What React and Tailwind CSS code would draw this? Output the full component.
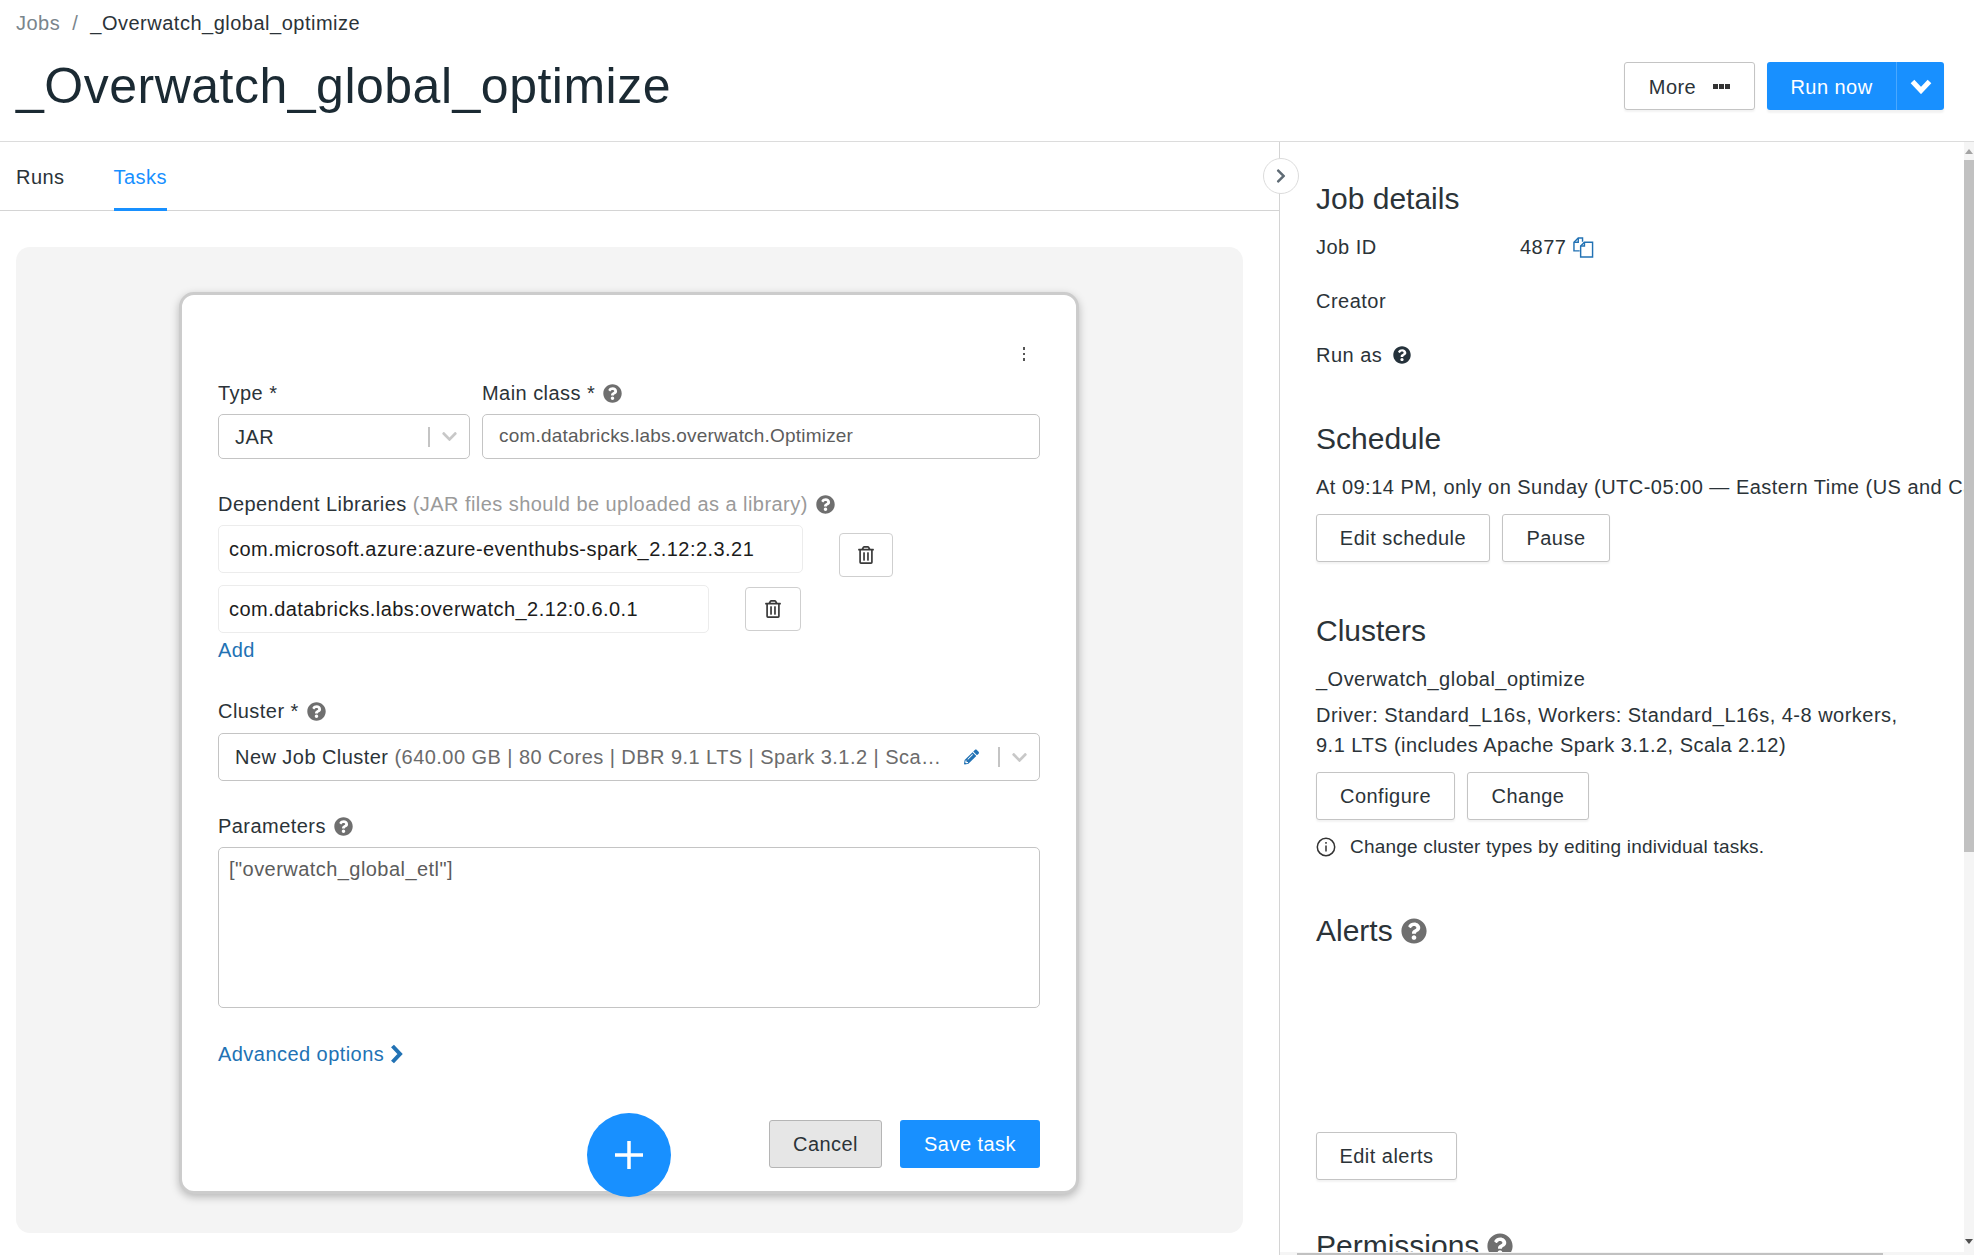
import React from 'react'
import { FaQuestionCircle, FaChevronDown, FaChevronRight, FaRegTrashAlt, FaPencilAlt } from 'react-icons/fa'

function OutlineButton({ children, className = '' }) {
  return (
    <button className={`h-[48px] rounded-[3px] border border-[#c4c4c4] bg-white text-[20px] text-[#2b3338] shadow-[0_2px_2px_rgba(0,0,0,0.05)] ${className}`}>
      {children}
    </button>
  )
}

function Help({ className = '' }) {
  return <FaQuestionCircle className={`inline-block shrink-0 text-[#6f6f6f] ${className}`} />
}

function TrashButton({ className = '' }) {
  return (
    <button className={`flex items-center justify-center rounded-[4px] border border-[#cfcfcf] bg-white text-[#3a3a3a] ${className}`}>
      <FaRegTrashAlt className="text-[18px]" />
    </button>
  )
}

function SelectArrow({ className = '' }) {
  return (
    <div className={`flex items-center ${className}`}>
      <span className="h-[20px] w-[2px] bg-[#c4c4c4]" />
      <FaChevronDown className="ml-[11px] text-[17px] text-[#c8c8c8]" />
    </div>
  )
}

function CopyIcon() {
  return (
    <svg viewBox="0 0 22 22" className="ml-[7px] h-[21px] w-[21px]" fill="none" stroke="#2272b4" strokeWidth="1.5">
      <path d="M7 14.5H1v-9L5.5 1H10v4" />
      <path d="M1 5.5h4.5V1" />
      <path d="M8 21V9.5L12 5.5h8.5V21z" fill="#fff" />
      <path d="M8 9.5h4V5.5" />
    </svg>
  )
}

function Header() {
  return (
    <header className="h-[142px] shrink-0 border-b border-[#dcdcdc] pl-4 pr-[30px]">
      <div className="flex h-[46px] items-center text-[20px] tracking-[0.5px]">
        <span className="text-[#7a858c]">Jobs</span>
        <span className="mx-[12px] text-[#7a858c]">/</span>
        <span className="text-[#2b3338]">_Overwatch_global_optimize</span>
      </div>
      <div className="flex items-start justify-between">
        <h1 className="mt-[10px] text-[50px] leading-[60px] tracking-[0.5px] text-[#1b2a33]">_Overwatch_global_optimize</h1>
        <div className="mt-4 flex">
          <OutlineButton className="flex w-[131px] items-center justify-center pt-px">
            More
            <span className="ml-[17px] flex gap-[1px]">
              <i className="h-[5px] w-[5px] bg-[#333]" />
              <i className="h-[5px] w-[5px] bg-[#333]" />
              <i className="h-[5px] w-[5px] bg-[#333]" />
            </span>
          </OutlineButton>
          <div className="ml-3 flex h-[48px] w-[177px] rounded-[3px] bg-[#1890ff] text-white shadow-[0_3px_2px_rgba(0,0,0,0.05)]">
            <button className="w-[130px] border-r border-[#4aa8ff] pt-px text-[20px]">Run now</button>
            <button className="flex flex-1 items-center justify-center">
              <svg viewBox="0 0 22 16" className="h-[16px] w-[22px]" fill="none" stroke="#fff" strokeWidth="5">
                <path d="M2.5 3.5l8.5 9 8.5-9" />
              </svg>
            </button>
          </div>
        </div>
      </div>
    </header>
  )
}

function TaskCard() {
  return (
    <div className="relative mt-[44px] ml-[163px] h-[902px] w-[900px] rounded-[15px] border-[3px] border-[#cccccc] bg-white pt-[83px] pr-[36px] pl-[36px] shadow-[0_3px_8px_rgba(0,0,0,0.25)]">
      <div className="absolute top-[52px] right-[51px] flex flex-col gap-[3px]">
        <i className="h-[2.5px] w-[2.5px] bg-[#555]" />
        <i className="h-[2.5px] w-[2.5px] bg-[#555]" />
        <i className="h-[2.5px] w-[2.5px] bg-[#555]" />
      </div>

      <div className="flex gap-3">
        <div className="w-[252px]">
          <div className="h-[30px] leading-[30px]">Type *</div>
          <div className="mt-[6px] flex h-[45px] items-center justify-between rounded-[5px] border border-[#c4c4c4] pr-[11px] pl-4">
            JAR
            <SelectArrow />
          </div>
        </div>
        <div className="flex-1">
          <div className="flex h-[30px] items-center">
            Main class *<Help className="ml-[8px] text-[19px]" />
          </div>
          <div className="mt-[6px] flex h-[45px] items-center rounded-[5px] border border-[#c4c4c4] pl-4 text-[19px] tracking-[0.2px] text-[#5c5c5c]">
            com.databricks.labs.overwatch.Optimizer
          </div>
        </div>
      </div>

      <div className="mt-[30px] flex h-[30px] items-center">
        Dependent Libraries<span className="ml-[6px] text-[#9a9a9a]">(JAR files should be uploaded as a library)</span>
        <Help className="ml-[8px] text-[19px]" />
      </div>
      <div className="mt-[6px] flex items-start">
        <div className="flex h-[48px] w-[585px] items-center rounded-[5px] border border-[#ececec] pl-[10px] text-[#1c1c1c]">
          com.microsoft.azure:azure-eventhubs-spark_2.12:2.3.21
        </div>
        <TrashButton className="mt-2 ml-[36px] h-[44px] w-[54px]" />
      </div>
      <div className="mt-[8px] flex items-start">
        <div className="flex h-[48px] w-[491px] items-center rounded-[5px] border border-[#ececec] pl-[10px] text-[#1c1c1c]">
          com.databricks.labs:overwatch_2.12:0.6.0.1
        </div>
        <TrashButton className="mt-[2px] ml-[36px] h-[44px] w-[56px]" />
      </div>
      <a className="mt-[2px] block h-[30px] leading-[30px] text-[#2272b4]">Add</a>

      <div className="mt-[31px] flex h-[30px] items-center">
        Cluster *<Help className="ml-[8px] text-[19px]" />
      </div>
      <div className="mt-[7px] flex h-[48px] items-center rounded-[5px] border border-[#c4c4c4] pr-[11px] pl-4">
        <span className="w-[706px] shrink-0 truncate text-[#6b6b6b]">
          <span className="text-[#2b3338]">New Job Cluster</span> (640.00 GB | 80 Cores | DBR 9.1 LTS | Spark 3.1.2 | Scala 2.12)
        </span>
        <FaPencilAlt className="ml-[23px] text-[16px] text-[#2272b4]" />
        <SelectArrow className="ml-[19px]" />
      </div>

      <div className="mt-[30px] flex h-[30px] items-center">
        Parameters<Help className="ml-[8px] text-[19px]" />
      </div>
      <div className="mt-[6px] h-[161px] rounded-[5px] border border-[#c4c4c4] px-[10px] py-[6px] leading-[30px] text-[#5c5c5c]">
        ["overwatch_global_etl"]
      </div>

      <a className="mt-[31px] flex h-[30px] items-center text-[#2272b4]">
        Advanced options
        <svg viewBox="0 0 13 20" className="ml-[6px] h-[20px] w-[13px]" fill="none" stroke="#2272b4" strokeWidth="4">
          <path d="M2.5 2l7.5 8-7.5 8" />
        </svg>
      </a>

      <div className="mt-[51px] flex justify-end gap-[18px]">
        <button className="h-[48px] w-[113px] rounded-[3px] border border-[#b5b5b5] bg-[#e6e6e6] text-[#2b3338]">Cancel</button>
        <button className="h-[48px] w-[140px] rounded-[3px] bg-[#1890ff] text-white">Save task</button>
      </div>

      <button className="absolute top-[818px] left-[405px] flex h-[84px] w-[84px] items-center justify-center rounded-full bg-[#1890ff]">
        <svg viewBox="0 0 30 30" className="h-[30px] w-[30px]" stroke="#fff" strokeWidth="3.5">
          <path d="M15 1v28M1 15h28" />
        </svg>
      </button>
    </div>
  )
}

function LeftPane() {
  return (
    <div className="relative w-[1280px] shrink-0 border-r border-[#d4d4d4]">
      <div className="flex h-[69px] gap-[49px] border-b border-[#d4d4d4] pl-4">
        <div className="flex h-[69px] items-center text-[#2b3338]">Runs</div>
        <div className="flex h-[69px] items-center border-b-[3px] border-[#1890ff] pt-[3px] text-[#1890ff]">Tasks</div>
      </div>
      <div className="mx-4 mt-[36px] h-[986px] w-[1227px] rounded-[14px] bg-[#f4f4f4] pt-px">
        <TaskCard />
      </div>
      <button className="absolute top-[16px] right-[-20px] flex h-[36px] w-[36px] items-center justify-center rounded-full border border-[#dcdcdc] bg-white">
        <FaChevronRight className="text-[16px] text-[#5f6b75]" />
      </button>
    </div>
  )
}

function RightPane() {
  return (
    <div className="flex min-w-0 flex-1 flex-col overflow-hidden">
      <div className="flex min-h-0 flex-1">
        <div className="min-w-0 flex-1 overflow-hidden pl-[36px] tracking-[0.48px] whitespace-nowrap text-[#2b3338]">
          <h2 className="mt-[40px] h-[34px] text-[30px] leading-[34px] tracking-normal">Job details</h2>
          <div className="mt-[4px] grid grid-cols-[204px_1fr] auto-rows-[54px] items-center">
            <span>Job ID</span>
            <span className="flex items-center">4877<CopyIcon /></span>
            <span className="col-span-2">Creator</span>
            <span className="col-span-2 flex items-center">Run as<FaQuestionCircle className="ml-[11px] text-[18px] text-[#25323b]" /></span>
          </div>

          <h2 className="mt-[40px] h-[34px] text-[30px] leading-[34px] tracking-normal">Schedule</h2>
          <p className="mt-[16px] h-[30px] leading-[30px]">At 09:14 PM, only on Sunday (UTC-05:00 — Eastern Time (US and Canada))</p>
          <div className="mt-[12px] flex gap-3">
            <OutlineButton className="w-[174px]">Edit schedule</OutlineButton>
            <OutlineButton className="w-[108px]">Pause</OutlineButton>
          </div>

          <h2 className="mt-[52px] h-[34px] text-[30px] leading-[34px] tracking-normal">Clusters</h2>
          <p className="mt-[16px] h-[30px] leading-[30px]">_Overwatch_global_optimize</p>
          <p className="mt-[6px] leading-[30px]">
            Driver: Standard_L16s, Workers: Standard_L16s, 4-8 workers,
            <br />
            9.1 LTS (includes Apache Spark 3.1.2, Scala 2.12)
          </p>
          <div className="mt-3 flex gap-3">
            <OutlineButton className="w-[139px]">Configure</OutlineButton>
            <OutlineButton className="w-[122px]">Change</OutlineButton>
          </div>
          <div className="mt-3 flex h-[30px] items-center text-[19px] tracking-[0.2px]">
            <svg viewBox="0 0 20 20" className="mr-[14px] h-[20px] w-[20px]" fill="none" stroke="#333" strokeWidth="1.5">
              <circle cx="10" cy="10" r="8.7" />
              <path d="M10 8.5v6M10 5v1.8" />
            </svg>
            Change cluster types by editing individual tasks.
          </div>

          <h2 className="mt-[52px] flex h-[34px] items-center text-[30px] leading-[34px] tracking-normal">Alerts<Help className="ml-[8px] text-[26px]" /></h2>
          <OutlineButton className="mt-[184px] block w-[141px]">Edit alerts</OutlineButton>
          <h2 className="mt-[49px] flex h-[34px] items-center text-[30px] leading-[34px] tracking-normal">Permissions<Help className="ml-[8px] text-[26px]" /></h2>
        </div>
        <div className="flex w-[10px] shrink-0 flex-col bg-[#f5f5f5]">
          <div className="flex h-[18px] items-center justify-center">
            <div className="h-0 w-0 border-x-[4px] border-b-[5px] border-x-transparent border-b-[#a3a3a3]" />
          </div>
          <div className="h-[692px] bg-[#c1c1c1]" />
          <div className="flex flex-1 items-end justify-center pb-[8px]">
            <div className="h-0 w-0 border-x-[4px] border-t-[5px] border-x-transparent border-t-[#505050]" />
          </div>
        </div>
      </div>
      <div className="h-[3px] shrink-0 bg-[#f5f5f5] pt-px pl-[17px]">
        <div className="h-[2px] w-[586px] bg-[#c1c1c1]" />
      </div>
    </div>
  )
}

export default function App() {
  return (
    <div className="flex h-screen flex-col overflow-hidden bg-white font-['Liberation_Sans',Arial,sans-serif] text-[20px] tracking-[0.45px] text-[#2b3338]">
      <Header />
      <div className="flex min-h-0 flex-1">
        <LeftPane />
        <RightPane />
      </div>
    </div>
  )
}
